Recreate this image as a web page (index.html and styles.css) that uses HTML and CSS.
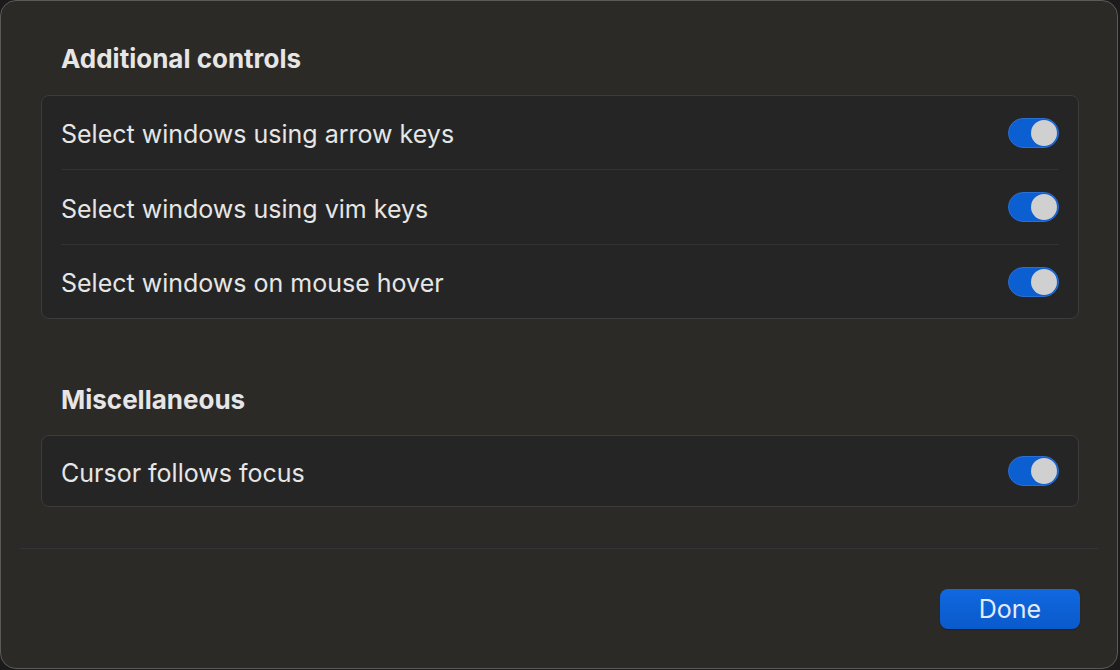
FILE: index.html
```html
<!DOCTYPE html>
<html>
<head>
<meta charset="utf-8">
<link rel="stylesheet" href="styles.css">
</head>
<body>
<div class="window">
  <div class="content">
    <section class="section">
      <h2 class="heading">Additional controls</h2>
      <div class="group">
        <div class="row"><span class="label">Select windows using arrow keys</span><span class="toggle"><span class="knob"></span></span></div>
        <div class="row"><span class="label">Select windows using vim keys</span><span class="toggle"><span class="knob"></span></span></div>
        <div class="row"><span class="label">Select windows on mouse hover</span><span class="toggle"><span class="knob"></span></span></div>
      </div>
    </section>
    <section class="section second">
      <h2 class="heading">Miscellaneous</h2>
      <div class="group">
        <div class="row"><span class="label">Cursor follows focus</span><span class="toggle"><span class="knob"></span></span></div>
      </div>
    </section>
  </div>
  <div class="footer">
    <button class="done">Done</button>
  </div>
</div>
</body>
</html>
```
FILE: styles.css
```css
* { box-sizing: border-box; }
html, body { margin: 0; padding: 0; }
body {
  background: #1b1b1b;
  width: 1120px;
  height: 670px;
  overflow: hidden;
  font-family: Inter, "Noto Sans", "Liberation Sans", sans-serif;
}
.window {
  width: 1118px;
  height: 669px;
  border: 1px solid #5c5a56;
  border-radius: 16px;
  background: #2b2a27;
  display: flex;
  flex-direction: column;
  overflow: hidden;
}
.content {
  margin: 0 19px;
  padding: 0 19px 41px 21px;
  border-bottom: 1px solid #34333a;
}
.section { display: flex; flex-direction: column; }
.heading {
  margin: 0;
  padding: 43px 0 0 20px;
  height: 94px;
  font-size: 26px;
  font-weight: 700;
  color: #e6e6e6;
  line-height: 30px;
}
.second .heading { padding-top: 66px; height: 116px; }
.group {
  background: #252525;
  border: 1px solid #3d3c3b;
  border-radius: 8px;
  padding: 0 19px 0 19px;
}
.row {
  height: 75px;
  display: flex;
  align-items: center;
  justify-content: space-between;
  border-bottom: 1px solid #333231;
}
.row:first-child { height: 74px; }
.row:last-child { border-bottom: none; height: 73px; }
.second .row { height: 70px; }
.label {
  font-size: 25px;
  color: #e6e6e6;
  padding-top: 3px;
}
.toggle {
  width: 51px;
  height: 30px;
  border-radius: 15px;
  background: #0b5fd1;
  border: 1px solid #2a6fd6;
  position: relative;
  display: block;
}
.knob {
  position: absolute;
  right: 1px;
  top: 1px;
  width: 26px;
  height: 26px;
  border-radius: 50%;
  background: #d0d0d0;
}
.footer {
  display: flex;
  justify-content: flex-end;
  padding: 40px 37px 0 0;
}
.done {
  width: 140px;
  height: 40px;
  border: none;
  border-radius: 8px;
  background: linear-gradient(#1068e0, #0a5acb);
  color: #e2ebfa;
  font-family: Inter, "Noto Sans", "Liberation Sans", sans-serif;
  font-size: 25px;
  padding: 0;
  box-shadow: 0 1px 1px rgba(0,0,0,0.3);
}
```
